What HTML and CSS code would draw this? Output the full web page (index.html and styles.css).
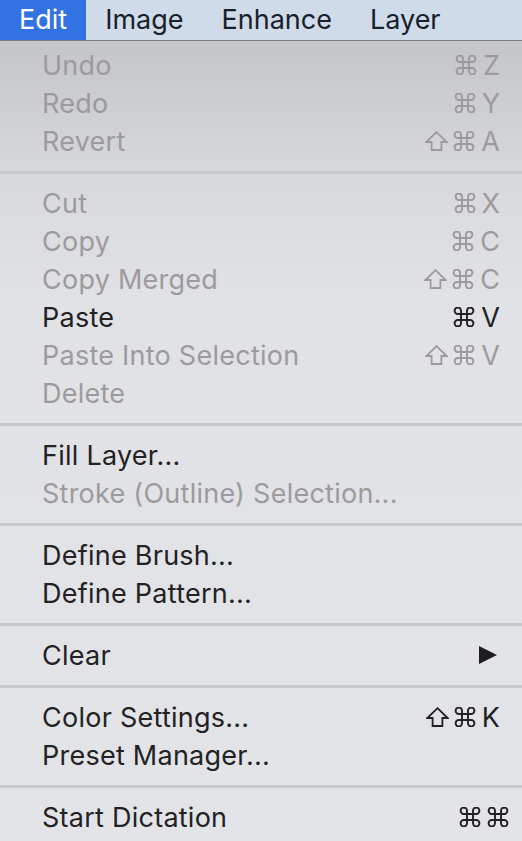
FILE: index.html
```html
<!DOCTYPE html>
<html>
<head>
<meta charset="utf-8">
<link rel="stylesheet" href="styles.css">
</head>
<body>
<div class="menubar">
  <div class="mb-item active">Edit</div>
  <div class="mb-item">Image</div>
  <div class="mb-item">Enhance</div>
  <div class="mb-item">Layer</div>
</div>
<svg width="0" height="0" class="defs">
  <defs>
    <symbol id="cmd" viewBox="0 0 22 20"><path d="M8 7 V3.8 A3.2 3.2 0 1 0 4.8 7 H17.2 A3.2 3.2 0 1 0 14 3.8 V16.2 A3.2 3.2 0 1 0 17.2 13 H4.8 A3.2 3.2 0 1 0 8 16.2 Z" fill="none" stroke="currentColor" stroke-width="1.9" stroke-linejoin="round"/></symbol>
    <symbol id="shift" viewBox="0 0 23 20"><path d="M11.5 1.2 L21.6 11 H16.4 V19 H6.6 V11 H1.4 Z" fill="none" stroke="currentColor" stroke-width="1.8" stroke-linejoin="miter"/></symbol>
  </defs>
</svg>
<div class="menu">
  <div class="row dis"><span class="label">Undo</span><span class="key"><svg class="cmd"><use href="#cmd"/></svg>Z</span></div>
  <div class="row dis"><span class="label">Redo</span><span class="key"><svg class="cmd"><use href="#cmd"/></svg>Y</span></div>
  <div class="row dis"><span class="label">Revert</span><span class="key"><svg class="sh"><use href="#shift"/></svg><svg class="cmd"><use href="#cmd"/></svg>A</span></div>
  <div class="sep"></div>
  <div class="row dis"><span class="label">Cut</span><span class="key"><svg class="cmd"><use href="#cmd"/></svg>X</span></div>
  <div class="row dis"><span class="label">Copy</span><span class="key"><svg class="cmd"><use href="#cmd"/></svg>C</span></div>
  <div class="row dis"><span class="label">Copy Merged</span><span class="key"><svg class="sh"><use href="#shift"/></svg><svg class="cmd"><use href="#cmd"/></svg>C</span></div>
  <div class="row"><span class="label">Paste</span><span class="key"><svg class="cmd"><use href="#cmd"/></svg>V</span></div>
  <div class="row dis"><span class="label">Paste Into Selection</span><span class="key"><svg class="sh"><use href="#shift"/></svg><svg class="cmd"><use href="#cmd"/></svg>V</span></div>
  <div class="row dis"><span class="label">Delete</span></div>
  <div class="sep"></div>
  <div class="row"><span class="label">Fill Layer...</span></div>
  <div class="row dis"><span class="label">Stroke (Outline) Selection...</span></div>
  <div class="sep"></div>
  <div class="row"><span class="label">Define Brush...</span></div>
  <div class="row"><span class="label">Define Pattern...</span></div>
  <div class="sep"></div>
  <div class="row"><span class="label">Clear</span><span class="arrow"></span></div>
  <div class="sep"></div>
  <div class="row"><span class="label">Color Settings...</span><span class="key"><svg class="sh"><use href="#shift"/></svg><svg class="cmd"><use href="#cmd"/></svg>K</span></div>
  <div class="row"><span class="label">Preset Manager...</span></div>
  <div class="sep"></div>
  <div class="row"><span class="label">Start Dictation</span><span class="key wide"><svg class="cmd"><use href="#cmd"/></svg><svg class="cmd last"><use href="#cmd"/></svg></span></div>
</div>
</body>
</html>
```
FILE: styles.css
```css
html, body {
  margin: 0;
  padding: 0;
  height: 100%;
  overflow: hidden;
}
body {
  font-family: Inter, "Liberation Sans", sans-serif;
  background: #e2e3e6;
}
.defs {
  position: absolute;
  width: 0;
  height: 0;
}
.menubar {
  height: 40px;
  display: flex;
  align-items: stretch;
  background: linear-gradient(90deg, #d2dcea 0%, #cfdbe9 50%, #d0dbe9 100%);
  border-bottom: 1px solid #7c7d80;
}
.mb-item {
  display: flex;
  align-items: center;
  padding: 0 19px 1px;
  font-size: 27px;
  color: #18202c;
}
.mb-item.active {
  background: #3272e3;
  color: #ffffff;
}
.menu {
  padding-top: 5px;
  background: linear-gradient(180deg, #c4c5c8 0px, #d8d9dc 140px, #e1e2e5 260px, #e3e4e7 100%);
  min-height: 800px;
}
.row {
  height: 38px;
  display: flex;
  align-items: center;
  justify-content: space-between;
  padding: 0 22px 0 43px;
  font-size: 27px;
  color: #222224;
}
.label {
  margin-left: -1px;
  letter-spacing: 0.25px;
}
.row.dis {
  color: #9b9b9e;
}
.key {
  display: flex;
  align-items: center;
}
.key.wide {
  margin-right: -9px;
}
.cmd {
  width: 22px;
  height: 20px;
  margin-right: 6px;
}
.cmd.last {
  margin-right: 0;
}
.sh {
  width: 23px;
  height: 20px;
  margin-right: 5px;
}
.arrow {
  width: 0;
  height: 0;
  border-top: 9.5px solid transparent;
  border-bottom: 9.5px solid transparent;
  border-left: 18px solid #1e1e20;
  margin-right: 3px;
}
.sep {
  height: 24px;
  display: flex;
  align-items: center;
}
.sep::before {
  content: "";
  flex: 1;
  height: 3px;
  background: #c8c9cc;
}
```
